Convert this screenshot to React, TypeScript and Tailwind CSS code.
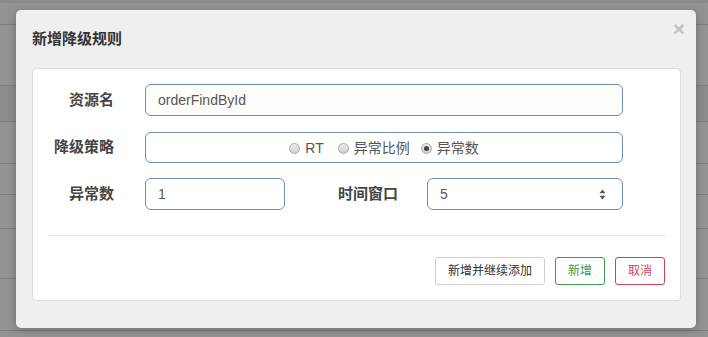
import React from "react";

const cjk = { fontFamily: '"Liberation Sans", "Noto Sans CJK SC", sans-serif' };

function Radio({ checked }: { checked?: boolean }) {
  return (
    <span className="relative inline-block w-[11px] h-[11px] rounded-full border border-[#a9a9a9] bg-gradient-to-b from-[#ececec] to-[#cfcfcf]">
      {checked && (
        <span className="absolute left-[2px] top-[2px] w-[5px] h-[5px] rounded-full bg-[#444]" />
      )}
    </span>
  );
}

export default function App() {
  return (
    <div className="relative w-[708px] h-[337px] overflow-hidden bg-[#939393]" style={cjk}>
      {/* background table rows */}
      <div className="flex flex-col">
        <div className="h-[3px] bg-[#8a8a8a]" />
        <div className="h-[21px]" />
        <div className="h-[61px] border-t border-[#7e7e7e]" />
        <div className="h-[36px] border-t border-[#7e7e7e] bg-[#8c8c8c]" />
        <div className="h-[42px] border-t border-[#7e7e7e]" />
        <div className="h-[31px] border-t border-[#7e7e7e]" />
        <div className="h-[34px] border-t border-[#7e7e7e]" />
        <div className="h-[50px] border-t border-[#7e7e7e]" />
        <div className="h-[52px] border-t border-[#7e7e7e]" />
        <div className="h-[20px] border-t border-[#7e7e7e]" />
      </div>

      {/* dialog */}
      <div className="absolute left-[16px] top-[10px] w-[680px] h-[318px] rounded-[5px] bg-[#efefef] shadow-[0_2px_8px_rgba(0,0,0,0.25)] flex flex-col pl-[16px] pr-[15px]">
        <div className="h-[58px] flex items-center justify-between">
          <span className="text-[15px] font-bold text-[#333] leading-none pb-[2px]">新增降级规则</span>
          <span className="text-[21px] font-bold text-[#c2c2c2] leading-none -mt-[22px] -mr-[4px]">×</span>
        </div>
        <div className="h-[233px] bg-white border border-[#dcdcdc] rounded-[4px] px-[15px] pt-[15px] flex flex-col">
          {/* row 1 */}
          <div className="flex items-center h-[32px]">
            <label className="w-[66px] text-right text-[15px] font-bold text-[#444]">资源名</label>
            <div className="ml-[31px] w-[478px] h-[32px] rounded-[6px] border border-[#6a8fb3] bg-[#fffefb] flex items-center px-[12px] text-[14px] text-[#555]">
              orderFindById
            </div>
          </div>
          {/* row 2 */}
          <div className="flex items-center h-[31px] mt-[16px]">
            <label className="w-[66px] text-right text-[15px] font-bold text-[#444]">降级策略</label>
            <div className="ml-[31px] w-[478px] h-[31px] rounded-[6px] border border-[#6a8fb3] bg-white flex items-center justify-center text-[14px] text-[#555] pt-[2px]">
              <span className="flex items-center">
                <Radio />
                <span className="ml-[5px]">RT</span>
              </span>
              <span className="flex items-center ml-[14px]">
                <Radio />
                <span className="ml-[5px]">异常比例</span>
              </span>
              <span className="flex items-center ml-[11px]">
                <Radio checked />
                <span className="ml-[5px]">异常数</span>
              </span>
            </div>
          </div>
          {/* row 3 */}
          <div className="flex items-center h-[32px] mt-[15px]">
            <label className="w-[66px] text-right text-[15px] font-bold text-[#444]">异常数</label>
            <div className="ml-[31px] w-[140px] h-[32px] rounded-[6px] border border-[#6a8fb3] bg-white flex items-center px-[12px] text-[14px] text-[#555]">
              1
            </div>
            <label className="ml-[51px] w-[62px] text-right text-[15px] font-bold text-[#444] whitespace-nowrap">时间窗口</label>
            <div className="ml-[29px] w-[196px] h-[32px] rounded-[6px] border border-[#6a8fb3] bg-white flex items-center justify-between pl-[12px] pr-[16px] text-[14px] text-[#555]">
              <span>5</span>
              <svg width="7" height="11" viewBox="0 0 7 11">
                <path d="M3.5 0.5 L6.5 4.2 L0.5 4.2 Z" fill="#555" />
                <path d="M3.5 10.5 L6.5 6.8 L0.5 6.8 Z" fill="#555" />
              </svg>
            </div>
          </div>
          {/* separator */}
          <div className="mt-[25px] border-t border-[#e2e2e2]" />
          {/* buttons */}
          <div className="flex justify-end mt-[21px] gap-[10px]">
            <button className="h-[28px] w-[110px] rounded-[3px] border border-[#cfcfcf] bg-white text-[12px] text-[#333]">
              新增并继续添加
            </button>
            <button className="h-[28px] w-[50px] rounded-[3px] border border-[#3f9a4b] bg-white text-[12px] text-[#3c9a48]">
              新增
            </button>
            <button className="h-[28px] w-[50px] rounded-[3px] border border-[#c9415a] bg-white text-[12px] text-[#d0455a]">
              取消
            </button>
          </div>
        </div>
      </div>
    </div>
  );
}
